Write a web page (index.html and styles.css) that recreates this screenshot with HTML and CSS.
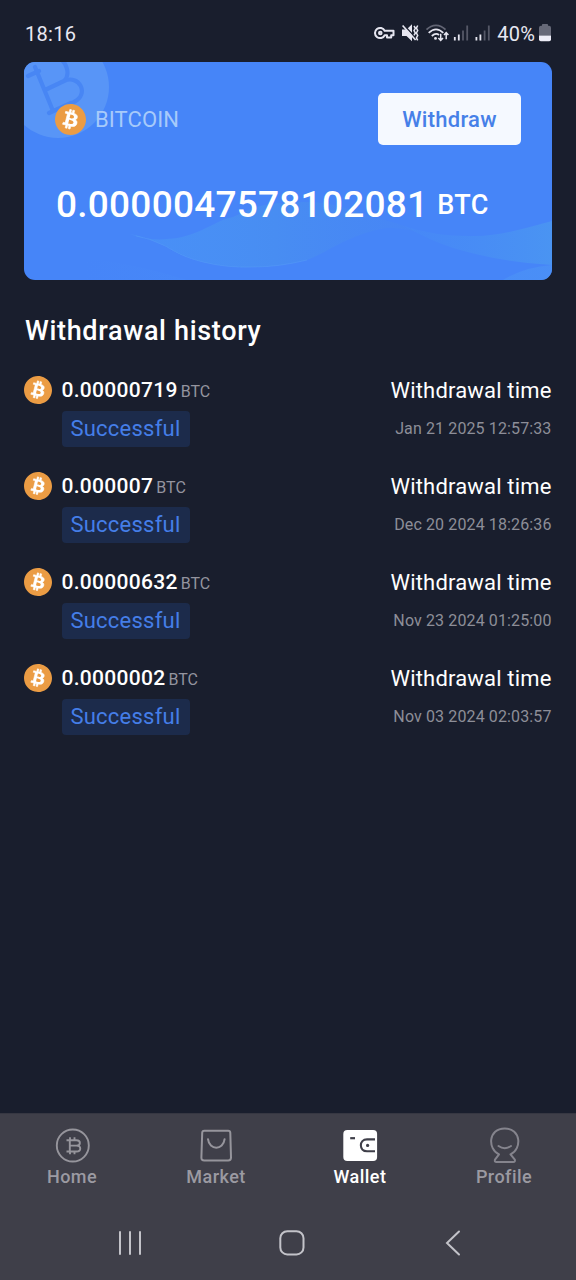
FILE: index.html
```html
<!DOCTYPE html>
<html lang="en">
<head>
<meta charset="utf-8">
<title>Wallet</title>
<link rel="stylesheet" href="styles.css">
</head>
<body>
<svg class="defs" width="0" height="0">
  <symbol id="coin" viewBox="0 0 24 24">
    <circle cx="12" cy="12" r="11" fill="#fff"/>
    <path fill="#eb9c44" stroke="#eb9c44" stroke-width="0" d="M23.638 14.904c-1.602 6.43-8.113 10.34-14.542 8.736C2.67 22.05-1.244 15.525.362 9.105 1.962 2.67 8.475-1.243 14.9.358c6.43 1.605 10.342 8.115 8.738 14.548v-.002zm-6.35-4.613c.24-1.59-.974-2.45-2.64-3.03l.54-2.153-1.315-.33-.525 2.107c-.345-.087-.705-.167-1.064-.25l.526-2.127-1.32-.33-.54 2.165c-.285-.067-.565-.132-.84-.2l-1.815-.45-.35 1.407s.975.225.955.236c.535.136.63.486.615.766l-1.477 5.92c-.075.166-.24.406-.614.314.015.02-.96-.24-.96-.24l-.66 1.51 1.71.426.93.242-.54 2.19 1.32.327.54-2.17c.36.1.705.19 1.05.273l-.51 2.154 1.32.33.545-2.19c2.24.427 3.93.257 4.64-1.774.57-1.637-.03-2.58-1.217-3.196.854-.193 1.5-.76 1.68-1.93h.01zm-3.01 4.22c-.404 1.64-3.157.75-4.05.53l.72-2.9c.896.23 3.757.67 3.33 2.37zm.41-4.24c-.37 1.49-2.662.735-3.405.55l.654-2.64c.744.18 3.137.524 2.75 2.084v.006z"/>
    <path fill="none" stroke="#fff" stroke-width=".5" stroke-linejoin="round" d="M17.288 10.291c.24-1.59-.974-2.45-2.64-3.03l.54-2.153-1.315-.33-.525 2.107c-.345-.087-.705-.167-1.064-.25l.526-2.127-1.32-.33-.54 2.165c-.285-.067-.565-.132-.84-.2l-1.815-.45-.35 1.407s.975.225.955.236c.535.136.63.486.615.766l-1.477 5.92c-.075.166-.24.406-.614.314.015.02-.96-.24-.96-.24l-.66 1.51 1.71.426.93.242-.54 2.19 1.32.327.54-2.17c.36.1.705.19 1.05.273l-.51 2.154 1.32.33.545-2.19c2.24.427 3.93.257 4.64-1.774.57-1.637-.03-2.58-1.217-3.196.854-.193 1.5-.76 1.68-1.93z"/>
  </symbol>
</svg>
<div class="screen">
  <header class="status">
    <span class="clock">18:16</span>
    <div class="indicators">
      <svg width="118" height="24" viewBox="0 0 118 24" fill="none" stroke="#e6e6f0">
        <g stroke-width="2" stroke-linejoin="round">
          <path d="M10.7 9.8A5.1 5.1 0 1 0 10.7 14.2H13V16.6H17.2V14.2H19.5V9.8Z"/>
          <circle cx="6.3" cy="12" r="1.3"/>
        </g>
        <g>
          <path d="M28 8.5h4.5l5.5-5.2v17l-5.5-5.3H28Z" fill="#e6e6f0" stroke="none"/>
          <path d="M30 4.2 44 19.5" stroke="#191e2d" stroke-width="1.6"/>
          <path d="M28.6 4.5 41.6 19" stroke-width="1.7"/>
          <path d="M40 5l1.4 2.3-1.4 2.3 1.4 2.4-1.4 2.3M43.7 4.5l-1.3 2.6 1.3 2.5-1.3 2.4 1.3 2.4-1.3 2.5 1.3 2.4" stroke-width="1.5"/>
        </g>
        <g stroke-width="1.8">
          <path d="M52.5 8.7C58 2.8 66 2.8 71.5 8.7" stroke="#626574"/>
          <path d="M54.7 11.9C59.5 7.3 64.5 7.3 69.3 11.9M57.8 15C60.8 12.3 63 12.3 65 14"/>
          <path d="M66.7 12.8v6.5M64.4 17l2.3 2.5 2.3-2.5M72.2 18.2v-6.4M70 14l2.2-2.3 2.2 2.3" stroke-width="1.5"/>
          <circle cx="61.5" cy="17.4" r="1.4" fill="#e6e6f0" stroke="none"/>
        </g>
        <g stroke-width="1.8">
          <path d="M80.8 16v3.5M84.8 13.5v6"/>
          <path d="M89 9.5v10M93.2 4.5v15" stroke="#555867"/>
          <path d="M102.4 16v3.5M106.4 13.5v6"/>
          <path d="M110.6 9.5v10M114.8 4.5v15" stroke="#555867"/>
        </g>
      </svg>
      <span class="percent">40%</span>
      <svg width="12" height="18" viewBox="0 0 12 18">
        <path d="M3 1.8V.8Q3 0 3.8 0H8.2Q9 0 9 .8V1.8H10Q12 1.8 12 3.8V11.5H0V3.8Q0 1.8 2 1.8Z" fill="#666978"/>
        <path d="M0 11.5H12V15.5Q12 17.3 10.2 17.3H1.8Q0 17.3 0 15.5Z" fill="#ededf7"/>
      </svg>
    </div>
  </header>

  <main class="content">
    <section class="card">
      <svg class="card-art" width="528" height="218" viewBox="0 0 528 218">
        <defs>
          <linearGradient id="waveA" x1="0" x2="1">
            <stop offset="0" stop-color="#4b98f6" stop-opacity=".5"/>
            <stop offset=".5" stop-color="#488df2"/>
            <stop offset="1" stop-color="#4887f3" stop-opacity=".5"/>
          </linearGradient>
          <linearGradient id="waveB" x1="0" x2="1">
            <stop offset="0" stop-color="#478af6" stop-opacity=".5"/>
            <stop offset="1" stop-color="#4a94f2"/>
          </linearGradient>
          <linearGradient id="corner" x1="0" x2="1">
            <stop offset="0" stop-color="#4b91f6" stop-opacity="0"/>
            <stop offset="1" stop-color="#4b91f6" stop-opacity=".8"/>
          </linearGradient>
        </defs>
        <circle cx="34" cy="25" r="51" fill="#5895f7"/>
        <g fill="none" stroke="#4886f4" stroke-width="4.2" stroke-linecap="round" stroke-linejoin="round">
          <path d="M11 5 29 49M4 14 15 9M25 51 47 41M21 28 40 19C55 12 66 32 50 40M40 19C47 13 43-3 30-6"/>
        </g>
        <path d="M106 172C128 180 143 177 153 176C180 171 192 158 209 155C226 146 240 141 263 141C300 137 325 146 346 155Q375 160 396 171Q380 166 363 166C325 172 305 190 283 198Q255 205 229 205Q202 206 179 200C155 194 148 187 139 183Q122 175 106 172Z" fill="url(#waveA)"/>
        <path d="M112 174Q125 176 139 183C148 187 155 194 179 200Q202 206 229 205Q255 205 283 198" fill="none" stroke="#60a8f8" stroke-opacity=".3"/>
        <path d="M380 164Q410 174 446 174C475 175 500 166 528 159V203Q475 200 429 186Q405 178 380 164Z" fill="url(#waveB)"/>
        <path d="M60 196Q110 201 163 218H60ZM479 218Q500 205 528 203V218Z" fill="url(#corner)"/>
      </svg>
      <div class="card-head">
        <svg class="coin-lg"><use href="#coin"/></svg>
        <span class="coin-name">BITCOIN</span>
        <button class="withdraw">Withdraw</button>
      </div>
      <div class="balance"><span class="balance-value">0.0000047578102081</span><span class="balance-unit">BTC</span></div>
    </section>

    <h2 class="title">Withdrawal history</h2>
    <ul class="history">
      <li class="item">
        <svg class="coin-sm"><use href="#coin"/></svg>
        <div class="left"><div class="amount">0.00000719<span class="unit">BTC</span></div><span class="tag">Successful</span></div>
        <div class="right"><div class="label">Withdrawal time</div><time class="date">Jan 21 2025 12:57:33</time></div>
      </li>
      <li class="item">
        <svg class="coin-sm"><use href="#coin"/></svg>
        <div class="left"><div class="amount">0.000007<span class="unit">BTC</span></div><span class="tag">Successful</span></div>
        <div class="right"><div class="label">Withdrawal time</div><time class="date">Dec 20 2024 18:26:36</time></div>
      </li>
      <li class="item">
        <svg class="coin-sm"><use href="#coin"/></svg>
        <div class="left"><div class="amount">0.00000632<span class="unit">BTC</span></div><span class="tag">Successful</span></div>
        <div class="right"><div class="label">Withdrawal time</div><time class="date">Nov 23 2024 01:25:00</time></div>
      </li>
      <li class="item">
        <svg class="coin-sm"><use href="#coin"/></svg>
        <div class="left"><div class="amount">0.0000002<span class="unit">BTC</span></div><span class="tag">Successful</span></div>
        <div class="right"><div class="label">Withdrawal time</div><time class="date">Nov 03 2024 02:03:57</time></div>
      </li>
    </ul>
  </main>

  <footer class="bottom">
    <nav class="tabs">
      <a class="tab">
        <svg width="36" height="40" viewBox="0 0 36 40" fill="none" stroke="#96959c" stroke-width="1.9">
          <circle cx="18.8" cy="20.5" r="16"/>
          <path d="M12.5 15.2H22.5C27 15.2 27 20.6 22.5 20.6H15.8M22.5 20.6C27.5 20.6 27.5 26.5 22.5 26.5H12.5M15.8 15.2V26.5M16 12.2V15M20.5 12.2V15M16 26.5V29.2M20.5 26.5V29.2"/>
        </svg>
        <span>Home</span>
      </a>
      <a class="tab">
        <svg width="36" height="40" viewBox="0 0 36 40" fill="none" stroke="#96959c" stroke-width="2">
          <path d="M6.3 5.8H30.2Q32.2 5.8 32.3 7.8L33 32.5Q33 35.5 30.2 35.5H6.2Q3.3 35.5 3.4 32.5L4.2 7.8Q4.3 5.8 6.3 5.8Z"/>
          <path d="M10 14.2C11.3 25.5 25.3 25.5 26.6 14.2" stroke-linecap="round"/>
        </svg>
        <span>Market</span>
      </a>
      <a class="tab active">
        <svg width="36" height="40" viewBox="0 0 36 40" fill="none">
          <rect x="1.3" y="5" width="33.8" height="31" rx="4" fill="#fff"/>
          <path d="M8.2 13.2H13" stroke="#3f3f49" stroke-width="2.2"/>
          <path d="M33 14.4H25C16.8 14.4 16.8 26.3 25 26.3H33" stroke="#3f3f49" stroke-width="2.1"/>
          <circle cx="25.6" cy="20.4" r="1.6" fill="#3f3f49"/>
        </svg>
        <span>Wallet</span>
      </a>
      <a class="tab">
        <svg width="36" height="40" viewBox="0 0 36 40" fill="none" stroke="#85848d" stroke-width="2" stroke-linejoin="round">
          <path d="M13 29.3C1.5 24.3 2 3.4 18.7 3.4S36 24.3 24.5 29.3L28.8 34.6Q29.4 37.1 27.2 37.1H10.5Q8.3 37.1 9 34.6Z"/>
          <path d="M12.5 21Q18.7 25.3 25 21" stroke-linecap="round"/>
        </svg>
        <span>Profile</span>
      </a>
    </nav>
    <div class="system-nav">
      <svg width="26" height="26" viewBox="0 0 26 26" stroke="#c3c3c9" stroke-width="2" stroke-linecap="round"><path d="M3 2V24M13 2V24M23 2V24"/></svg>
      <svg width="26" height="26" viewBox="0 0 26 26" fill="none" stroke="#c3c3c9" stroke-width="2"><rect x="1.3" y="1.2" width="23.2" height="23.2" rx="7"/></svg>
      <svg width="26" height="26" viewBox="0 0 26 26" fill="none" stroke="#c3c3c9" stroke-width="2" stroke-linecap="round"><path d="M19 1.5 7 13 19 24.5"/></svg>
    </div>
  </footer>
</div>
</body>
</html>
```
FILE: styles.css
```css
* { box-sizing: border-box; }

body {
  margin: 0;
  background: #191e2d;
  color: #fff;
  font-family: Roboto, "Liberation Sans", sans-serif;
}

svg { display: block; flex: none; }
.defs { position: absolute; }

.screen {
  display: flex;
  flex-direction: column;
  width: 576px;
  height: 1280px;
}

.status {
  display: flex;
  justify-content: space-between;
  align-items: center;
  height: 62px;
  padding: 5px 25px 0 25px;
  color: #e8e8f2;
}

.clock, .percent {
  font-size: 20px;
  line-height: 24px;
}

.clock { letter-spacing: 0.3px; }

.indicators {
  display: flex;
  align-items: center;
}

.indicators svg { margin-bottom: 1px; }
.percent { margin: 0 4px 0 5px; letter-spacing: 0.2px; }

.content {
  flex: 1;
  padding: 0 24px;
}

.card {
  position: relative;
  height: 218px;
  padding: 31px 31px 0 31px;
  border-radius: 11px;
  overflow: hidden;
  background: #4685f8;
}

.card-art {
  position: absolute;
  inset: 0;
}

.card-head {
  position: relative;
  display: flex;
  align-items: center;
  height: 52px;
}

.coin-lg { width: 31px; height: 31px; }

.coin-name {
  flex: 1;
  margin-left: 9px;
  font-size: 22px;
  letter-spacing: 0.1px;
  color: #a7cafa;
}

.withdraw {
  width: 143px;
  height: 52px;
  padding: 0;
  border: 0;
  border-radius: 5px;
  background: #f5f9ff;
  color: #4680e8;
  font: 500 22px Roboto, sans-serif;
  letter-spacing: 0.25px;
}

.balance {
  position: relative;
  display: flex;
  align-items: center;
  margin: 37px 0 0 1px;
  line-height: 44px;
  font-weight: 500;
}

.balance-value { padding-top: 1px; font-size: 37px; letter-spacing: 0.25px; }
.balance-unit { margin-left: 9px; padding-top: 1px; font-size: 27px; letter-spacing: 0.3px; }

.title {
  margin: 34px 0 0 1px;
  padding-top: 1px;
  font-size: 27px;
  line-height: 32px;
  font-weight: 500;
  letter-spacing: 0.67px;
}

.history {
  margin: 28px 0 0;
  padding: 0;
  list-style: none;
}

.item {
  display: flex;
  height: 96px;
}

.coin-sm { width: 28px; height: 28px; margin-top: 1px; }
.left { flex: 1; margin-left: 9.5px; }

.amount {
  line-height: 31px;
  font-size: 21px;
  font-weight: 500;
  letter-spacing: 0.3px;
}

.unit {
  margin-left: 3px;
  font-size: 16px;
  font-weight: 400;
  letter-spacing: 0;
  color: #94949f;
}

.tag {
  display: block;
  width: 128px;
  height: 36px;
  margin-top: 4px;
  border-radius: 4px;
  background: #1c2b4b;
  color: #457ee8;
  font-size: 22px;
  line-height: 35px;
  letter-spacing: 0.25px;
  text-align: center;
}

.right { margin-right: 0.5px; text-align: right; }

.label {
  font-size: 22px;
  line-height: 32px;
  letter-spacing: 0.17px;
}

.date {
  display: block;
  margin-top: 12px;
  font-size: 16px;
  line-height: 20px;
  letter-spacing: 0.12px;
  color: #8d8e98;
}

.bottom {
  height: 167px;
  background: #3f3f49;
  border-top: 1px solid #363742;
}

.tabs {
  display: grid;
  grid-template-columns: repeat(4, 144px);
  padding-top: 11px;
}

.tab {
  display: flex;
  flex-direction: column;
  align-items: center;
  gap: 1px;
  color: #9b9aa2;
  font-size: 18px;
  line-height: 22px;
  font-weight: 500;
  letter-spacing: 0.45px;
}

.active { color: #fff; }

.system-nav {
  display: grid;
  grid-template-columns: 26px 26px 26px;
  justify-content: space-between;
  padding: 42px 110px 0 117px;
}
```
